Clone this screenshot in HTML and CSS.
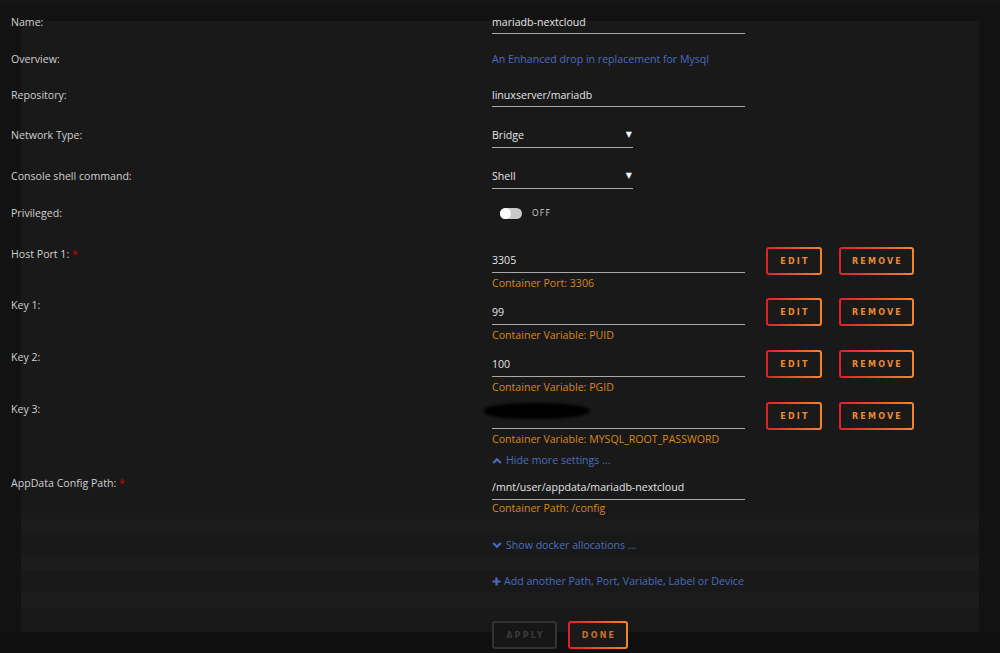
FILE: index.html
```html
<!DOCTYPE html>
<html>
<head>
<meta charset="utf-8">
<link rel="stylesheet" href="styles.css">
</head>
<body>
<div class="screen">
  <div class="sheet">
    <div class="form">
      <div class="row row-name">
        <div class="label">Name:</div>
        <div class="field"><div class="input">mariadb-nextcloud</div></div>
      </div>
      <div class="row row-overview">
        <div class="label">Overview:</div>
        <div class="field"><div class="link">An Enhanced drop in replacement for Mysql</div></div>
      </div>
      <div class="row row-repo">
        <div class="label">Repository:</div>
        <div class="field"><div class="input">linuxserver/mariadb</div></div>
      </div>
      <div class="row row-network">
        <div class="label">Network Type:</div>
        <div class="field"><div class="select"><span>Bridge</span><span class="caret">▼</span></div></div>
      </div>
      <div class="row row-console">
        <div class="label">Console shell command:</div>
        <div class="field"><div class="select"><span>Shell</span><span class="caret">▼</span></div></div>
      </div>
      <div class="row row-priv">
        <div class="label">Privileged:</div>
        <div class="field"><div class="switch"><span class="track"></span><span class="state">OFF</span></div></div>
      </div>
      <div class="row row-config row-host">
        <div class="label">Host Port 1: <span class="req">*</span></div>
        <div class="field field-config">
          <div class="input input-config">3305</div>
          <div class="hint">Container Port: 3306</div>
        </div>
        <div class="actions"><button class="btn btn-edit">EDIT</button><button class="btn btn-remove">REMOVE</button></div>
      </div>
      <div class="row row-config">
        <div class="label">Key 1:</div>
        <div class="field field-config">
          <div class="input input-config">99</div>
          <div class="hint">Container Variable: PUID</div>
        </div>
        <div class="actions"><button class="btn btn-edit">EDIT</button><button class="btn btn-remove">REMOVE</button></div>
      </div>
      <div class="row row-config">
        <div class="label">Key 2:</div>
        <div class="field field-config">
          <div class="input input-config">100</div>
          <div class="hint">Container Variable: PGID</div>
        </div>
        <div class="actions"><button class="btn btn-edit">EDIT</button><button class="btn btn-remove">REMOVE</button></div>
      </div>
      <div class="row row-config row-key3">
        <div class="label">Key 3:</div>
        <div class="field field-config">
          <div class="input input-config"><span class="masked"></span></div>
          <div class="hint">Container Variable: MYSQL_ROOT_PASSWORD</div>
        </div>
        <div class="actions"><button class="btn btn-edit">EDIT</button><button class="btn btn-remove">REMOVE</button></div>
      </div>
      <div class="row row-hide">
        <div class="label"></div>
        <div class="field"><div class="link link-icon"><svg class="ico" width="10" height="7" viewBox="0 0 10 7"><path d="M1.2 6 L5 2.2 L8.8 6" fill="none" stroke="#4a6cbf" stroke-width="2.2"/></svg>Hide more settings ...</div></div>
      </div>
      <div class="row row-appdata">
        <div class="label">AppData Config Path: <span class="req">*</span></div>
        <div class="field field-path">
          <div class="input input-config">/mnt/user/appdata/mariadb-nextcloud</div>
          <div class="hint hint-path">Container Path: /config</div>
        </div>
      </div>
      <div class="row row-show">
        <div class="label"></div>
        <div class="field"><div class="link link-icon"><svg class="ico" width="10" height="7" viewBox="0 0 10 7"><path d="M1.2 1 L5 4.8 L8.8 1" fill="none" stroke="#4a6cbf" stroke-width="2.2"/></svg>Show docker allocations ...</div></div>
      </div>
      <div class="row row-add">
        <div class="label"></div>
        <div class="field field-wide"><div class="link link-icon link-add"><svg class="ico-plus" width="9" height="9" viewBox="0 0 9 9"><path d="M4.5 0.5 V8.5 M0.5 4.5 H8.5" fill="none" stroke="#4a6cbf" stroke-width="2.2"/></svg>Add another Path, Port, Variable, Label or Device</div></div>
      </div>
      <div class="row row-footer">
        <div class="label"></div>
        <div class="footer-buttons"><button class="btn btn-apply">APPLY</button><button class="btn btn-done">DONE</button></div>
      </div>
    </div>
  </div>
</div>
</body>
</html>
```

FILE: styles.css
```css
* { box-sizing: border-box; }
html, body { margin: 0; padding: 0; }
body {
  width: 1000px;
  height: 653px;
  overflow: hidden;
  background: #111111;
  font-family: "Open Sans", "Noto Sans", sans-serif;
  font-size: 10.6px;
  line-height: 14px;
  color: #d2d2d2;
}
.screen {
  height: 653px;
  padding: 21px 21px 0 21px;
  background: linear-gradient(to bottom, #151515 0, #121212 8px, #121212 632px, #0f0f0f 632px);
}
.sheet {
  display: flow-root;
  height: 611px;
  background: linear-gradient(to bottom,
    #191919 0, #191919 498px,
    #1c1c1c 498px, #1c1c1c 512px,
    #191919 512px, #191919 535px,
    #1c1c1c 535px, #1c1c1c 549px,
    #191919 549px, #191919 572px,
    #1c1c1c 572px, #1c1c1c 586px,
    #191919 586px);
}
.form {
  margin: -6px 0 0 -10px;
}
.row { display: flex; align-items: flex-start; }
.label { width: 481px; flex: none; color: #d0d0d0; }
.req { color: #d40000; }
.field { width: 253px; flex: none; }
.field-wide { width: 300px; }

.row-name { height: 37px; }
.row-overview { height: 36px; }
.row-repo { height: 40px; }
.row-network { height: 41px; }
.row-console { height: 37px; }
.row-priv { height: 41px; }
.row-config { height: 52px; }
.row-host { height: 51px; }
.row-key3 { height: 51px; }
.row-hide { height: 23px; }
.row-appdata { height: 62px; }
.row-show { height: 36px; }
.row-add { height: 47px; }

.input {
  color: #e4e4e4;
  padding-bottom: 4px;
  border-bottom: 1px solid #a9a9a9;
}
.field-config { padding-top: 7px; }
.row-host .field-config { padding-top: 6px; }
.input-config { padding-bottom: 5px; }
.field-path { padding-top: 4px; }
.hint { color: #dc8718; margin-top: 3px; }
.hint-path { margin-top: 1px; }

.masked {
  display: block;
  width: 106px;
  height: 16px;
  margin: -6px 0 4px -8px;
  background: #000;
  border-radius: 45% 50% 50% 45%;
  filter: blur(1.4px);
}

.link { color: #4a6cbf; }
.link-icon { display: flex; align-items: center; }
.ico { margin-right: 4px; flex: none; }
.ico-plus { margin-right: 3px; flex: none; }

.select {
  width: 141px;
  display: flex;
  justify-content: space-between;
  align-items: center;
  color: #e4e4e4;
  padding: 0 1px 5px 0;
  border-bottom: 1px solid #a9a9a9;
}
.caret { font-family: "DejaVu Sans", sans-serif; font-size: 8px; line-height: 14px; color: #f4f4f4; }

.switch { display: flex; align-items: center; height: 14px; padding-left: 8px; }
.track {
  position: relative;
  width: 22px;
  height: 11px;
  border-radius: 6px;
  background: #c9c9c9;
}
.track::after {
  content: "";
  position: absolute;
  left: 0;
  top: 0;
  width: 11px;
  height: 11px;
  border-radius: 50%;
  background: #fafafa;
}
.state {
  margin-left: 10px;
  font-size: 8.5px;
  letter-spacing: 1.2px;
  color: #cfcfcf;
}

.actions { display: flex; gap: 17px; margin-left: 21px; }
.btn {
  height: 28px;
  padding: 0;
  border: 2px solid transparent;
  border-radius: 3px;
  background:
    linear-gradient(#1a1a1a, #1a1a1a) padding-box,
    linear-gradient(90deg, #df1f2a, #f5852b) border-box;
  color: #ec8a32;
  font-family: "DejaVu Sans", "Open Sans", sans-serif;
  font-weight: bold;
  font-size: 8px;
  letter-spacing: 2.2px;
  text-align: center;
  text-indent: 2px;
}
.btn-edit { width: 56px; }
.btn-remove { width: 75px; }
.footer-buttons { display: flex; gap: 11px; }
.btn-apply {
  width: 65px;
  background: #161616;
  border: 2px solid #333333;
  color: #3a3a3a;
}
.btn-done { width: 60px; color: #c8702a; }
```
